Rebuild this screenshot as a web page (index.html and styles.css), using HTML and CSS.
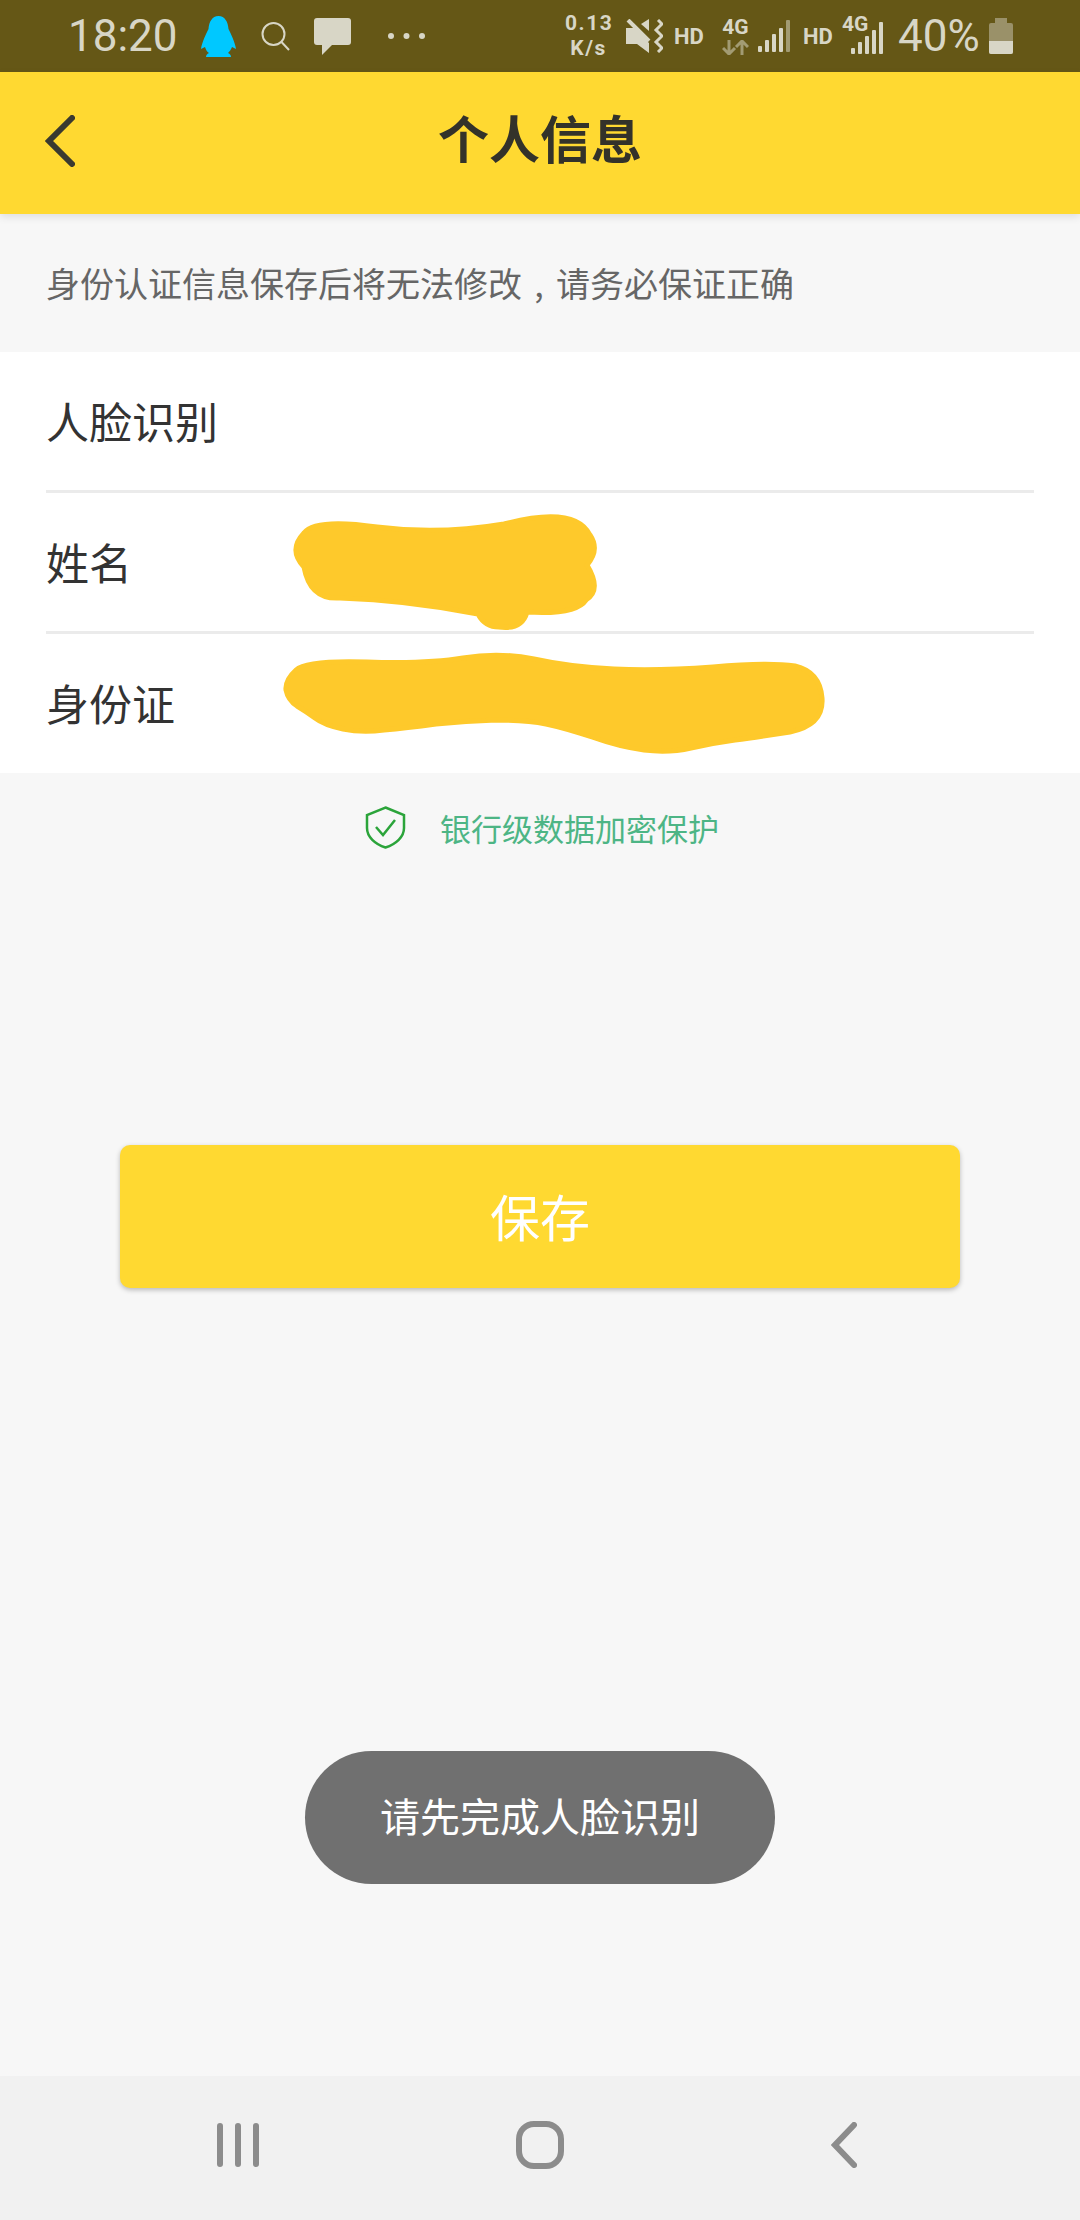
FILE: index.html
```html
<!DOCTYPE html>
<html lang="zh-CN">
<head>
    <meta charset="UTF-8">
    <title>个人信息</title>
    <link rel="stylesheet" href="styles.css">
</head>
<body>
<div class="page">
    <div class="status-bar">
        <div class="status-left">
            <span class="time">18:20</span>
            <svg class="penguin" width="35" height="41" viewBox="0 0 35 41"><path d="M17.5 0C24 0 27 6 27.5 13C30 18 34 26 35 33L31 31C30 34 28 36 27 37C29 38 30 39 30 41L5 41C5 39 6 38 8 37C6 36 5 34 4 31L0 33C1 26 5 18 7.5 13C8 6 11 0 17.5 0Z"/></svg>
            <svg class="search" width="29" height="29" viewBox="0 0 29 29"><circle cx="12.5" cy="12" r="11"/><line x1="20.5" y1="20" x2="28" y2="28"/></svg>
            <svg class="chat" width="37" height="37" viewBox="0 0 37 37"><rect width="37" height="27" rx="3"/><polygon points="8,26 8,37 19,26"/></svg>
            <svg class="dots" width="39" height="8" viewBox="0 0 39 8"><circle cx="4" cy="4" r="3"/><circle cx="19.500" cy="4" r="3"/><circle cx="35" cy="4" r="3"/></svg>
        </div>
        <div class="status-right">
            <div class="speed">0.13<br>K/s</div>
            <svg class="mute" width="37" height="34" viewBox="0 0 37 34">
                <polygon points="15,5 23,0 23,12"/>
                <polygon points="0,9 8,9 23,24 23,34 11,25 0,25"/>
                <line x1="2" y1="1" x2="23" y2="22"/>
                <path d="M32 1L36 5L30 11L36 17L30 23L36 29L32 33"/>
            </svg>
            <span class="hd">HD</span>
            <div class="net">
                <span>4G</span>
                <svg width="27" height="15" viewBox="0 0 27 15"><path d="M7 0V14M1 8L7 14L13 8M20 15V1M14 7L20 1L26 7"/></svg>
            </div>
            <svg class="signal" width="32" height="32" viewBox="0 0 32 32">
                <rect x="0" y="26" width="4" height="6" rx="1"/>
                <rect x="7" y="20" width="4" height="12" rx="1"/>
                <rect x="14" y="14" width="4" height="18" rx="1"/>
                <rect x="21" y="8" width="4" height="24" rx="1"/>
                <rect class="dim" x="28" y="0" width="4" height="32" rx="1"/>
            </svg>
            <span class="hd">HD</span>
            <div class="net-two">
                <span>4G</span>
                <svg class="signal" width="32" height="32" viewBox="0 0 32 32">
                    <rect x="0" y="26" width="4" height="6" rx="1"/>
                    <rect x="7" y="20" width="4" height="12" rx="1"/>
                    <rect x="14" y="14" width="4" height="18" rx="1"/>
                    <rect x="21" y="8" width="4" height="24" rx="1"/>
                    <rect x="28" y="0" width="4" height="32" rx="1"/>
                </svg>
            </div>
            <span class="percent">40%</span>
            <div class="battery">
                <div class="battery-cap"></div>
                <div class="battery-body"><div class="battery-level"></div></div>
            </div>
        </div>
    </div>

    <div class="app-bar">
        <svg class="back" width="30" height="52" viewBox="0 0 30 52"><path d="M27 3L4 26L27 49"/></svg>
        <h1>个人信息</h1>
    </div>

    <main class="content">
        <p class="notice">身份认证信息保存后将无法修改<span class="comma">,</span>请务必保证正确</p>

        <div class="info-list">
            <div class="info-row">人脸识别</div>
            <div class="info-row">姓名</div>
            <div class="info-row last">身份证</div>
            <svg class="scribble" width="1080" height="421" viewBox="0 352 1080 421">
                <path d="M304 533Q315 518 377 527Q439 535 504 524Q575 505 590 535Q600 550 587 565Q602 590 586 600Q576 615 527 612Q522 630 499 627Q485 627 478 614Q406 600 340 598Q310 600 304 567Q288 550 304 533Z"/>
                <path d="M296 670Q307 660 367 662Q428 664 463 658Q499 652 534 659Q570 667 614 669Q658 671 713 667Q768 662 795 666Q820 672 822 698Q824 725 790 732Q757 737 735 740Q713 743 691 748Q669 753 644 750Q620 747 592 737Q565 728 546 724Q527 720 496 720Q466 721 436 724Q406 728 384 730Q362 733 343 729Q324 725 315 718Q307 712 297 706Q288 700 286 690Q285 680 296 670Z"/>
            </svg>
        </div>

        <div class="secure">
            <svg width="41" height="43" viewBox="0 0 41 43">
                <path class="shield" d="M20.500 1.500L39 9V22C39 31 31 38 20.500 41.500C10 38 2 31 2 22V9Z"/>
                <path class="tick" d="M11 21L18 29L30 14"/>
            </svg>
            <span>银行级数据加密保护</span>
        </div>

        <button class="save" type="button">保存</button>

        <div class="toast">请先完成人脸识别</div>
    </main>

    <div class="nav-bar">
        <svg width="42" height="44" viewBox="0 0 42 44"><path d="M3 3V41M21 3V41M39 3V41"/></svg>
        <svg class="home" width="48" height="48" viewBox="0 0 48 48"><rect x="3" y="3" width="42" height="42" rx="15"/></svg>
        <svg width="26" height="46" viewBox="0 0 26 46"><path d="M23 3L4 23L23 43"/></svg>
    </div>
</div>
</body>
</html>
```

FILE: styles.css
```css
*{
    box-sizing: border-box;
}
body{
    margin: 0;
    font-family: "Noto Sans CJK SC", "Noto Sans", sans-serif;
    background-color: #f7f7f7;
}
.page{
    display: flex;
    flex-direction: column;
    width: 1080px;
    height: 2220px;
    overflow: hidden;
}

/* status bar */
.status-bar{
    display: flex;
    justify-content: space-between;
    align-items: center;
    height: 72px;
    padding: 0 67px 0 68px;
    background-color: #655716;
    color: #d8d6c6;
    font-family: Roboto, sans-serif;
}
.status-left, .status-right{
    display: flex;
    align-items: center;
}
.time{
    width: 110px;
    margin-right: 23px;
    font-size: 44px;
    line-height: 72px;
    white-space: nowrap;
}
.penguin{
    margin-right: 25px;
    fill: #00c8ff;
}
.search{
    margin-right: 24px;
    fill: none;
    stroke: #d8d6c6;
    stroke-width: 2;
}
.chat{
    margin-right: 36px;
    fill: #d8d6c6;
}
.dots{
    fill: #d8d6c6;
}
.speed{
    width: 47px;
    margin-right: 14px;
    font-size: 21px;
    font-weight: 700;
    letter-spacing: 1.5px;
    line-height: 25px;
    text-align: center;
}
.mute{
    margin-right: 11px;
    fill: #d8d6c6;
    stroke: none;
}
.mute line{
    stroke: #d8d6c6;
    stroke-width: 4;
}
.mute path{
    fill: none;
    stroke: #d8d6c6;
    stroke-width: 3;
}
.hd{
    width: 30px;
    font-size: 22px;
    font-weight: 700;
    white-space: nowrap;
}
.net{
    display: flex;
    flex-direction: column;
    align-items: center;
    width: 27px;
    margin: 0 9px 0 18px;
    font-size: 21px;
    font-weight: 700;
    line-height: 20px;
}
.net svg{
    margin-top: 3px;
    fill: none;
    stroke: #a29b73;
    stroke-width: 3;
}
.signal{
    margin-right: 13px;
    fill: #d8d6c6;
}
.signal .dim{
    fill: #a29b73;
}
.net-two{
    position: relative;
    width: 41px;
    height: 36px;
    margin: 0 15px 0 9px;
    font-size: 21px;
    font-weight: 700;
    line-height: 20px;
}
.net-two span{
    position: absolute;
    top: -4px;
    left: 0;
}
.net-two .signal{
    position: absolute;
    top: 4px;
    right: 0;
    margin: 0;
}
.percent{
    width: 81px;
    margin-right: 10px;
    font-size: 44px;
    white-space: nowrap;
}
.battery{
    display: flex;
    flex-direction: column;
    align-items: center;
    width: 24px;
}
.battery-cap{
    width: 12px;
    height: 5px;
    background-color: #9a9169;
}
.battery-body{
    display: flex;
    align-items: flex-end;
    width: 24px;
    height: 31px;
    border-radius: 2px;
    background-color: #9a9169;
    overflow: hidden;
}
.battery-level{
    width: 100%;
    height: 13px;
    background-color: #d8d6c6;
}

/* app bar */
.app-bar{
    position: relative;
    display: flex;
    justify-content: center;
    align-items: center;
    height: 142px;
    padding-bottom: 12px;
    background-color: #ffd931;
    box-shadow: 0 3px 8px rgba(0,0,0,.1);
}
.app-bar h1{
    margin: 0;
    font-size: 51px;
    font-weight: 700;
    color: #33322a;
}
.back{
    position: absolute;
    left: 45px;
    top: 43px;
    fill: none;
    stroke: #3a3a30;
    stroke-width: 6;
    stroke-linecap: round;
}

/* content */
.content{
    position: relative;
    display: flex;
    flex-direction: column;
    flex: 1;
}
.notice{
    display: flex;
    align-items: center;
    height: 138px;
    margin: 0;
    padding: 0 0 2px 46px;
    font-size: 34px;
    color: #666;
}
.comma{
    width: 34px;
    text-align: center;
}
.info-list{
    position: relative;
    padding: 0 46px;
    background-color: #fff;
}
.info-row{
    display: flex;
    align-items: center;
    height: 141px;
    padding-bottom: 3px;
    border-bottom: 3px solid #ebebeb;
    font-size: 43px;
    color: #333;
}
.info-row.last{
    height: 139px;
    border-bottom: none;
}
.scribble{
    position: absolute;
    top: 0;
    left: 0;
    fill: #fec92b;
    stroke: #fec92b;
    stroke-width: 5;
}
.secure{
    display: flex;
    justify-content: center;
    align-items: center;
    gap: 34px;
    padding-top: 32px;
    padding-left: 4px;
    font-size: 31px;
    color: #4db585;
}
.shield{
    fill: none;
    stroke: #2ba43a;
    stroke-width: 2.500;
}
.tick{
    fill: none;
    stroke: #2ba43a;
    stroke-width: 2.500;
}
.save{
    align-self: center;
    width: 840px;
    height: 143px;
    margin-top: 295px;
    padding-bottom: 4px;
    border: none;
    border-radius: 10px;
    background-color: #ffd931;
    box-shadow: 0 2px 5px rgba(0,0,0,.25);
    font-family: inherit;
    font-size: 50px;
    color: #fff;
}
.toast{
    position: absolute;
    top: 1537px;
    left: 305px;
    display: flex;
    justify-content: center;
    align-items: center;
    width: 470px;
    height: 133px;
    padding-bottom: 5px;
    border-radius: 67px;
    background-color: #707070;
    font-size: 40px;
    color: #fff;
}

/* nav bar */
.nav-bar{
    display: flex;
    justify-content: space-between;
    align-items: center;
    height: 144px;
    padding: 0 223px 6px 217px;
    background-color: #f1f1f1;
}
.nav-bar svg{
    fill: none;
    stroke: #8c8c8c;
    stroke-width: 6;
    stroke-linecap: round;
}
.nav-bar .home{
    margin-right: 10px;
}
```
